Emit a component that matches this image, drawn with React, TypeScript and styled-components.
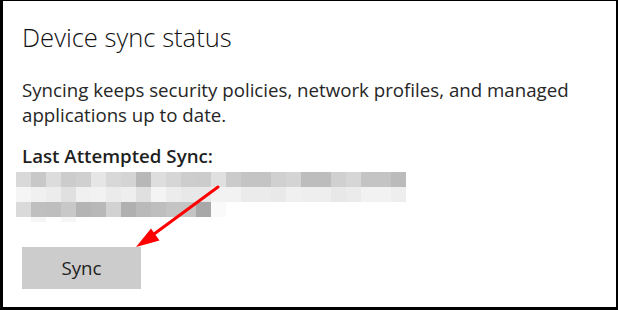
import styled, { createGlobalStyle } from 'styled-components';

const GlobalStyle = createGlobalStyle`
  html, body {
    margin: 0;
    padding: 0;
    background: #ffffff;
  }
  body {
    font-family: 'Open Sans', 'Noto Sans', sans-serif;
  }
`;

const Frame = styled.div`
  position: relative;
  box-sizing: border-box;
  width: 618px;
  height: 310px;
  border-style: solid;
  border-color: #000000;
  border-width: 1px 2px 3px 3px;
  background: #ffffff;
  padding: 21px 0 0 19px;
  display: flex;
  flex-direction: column;
  align-items: flex-start;
`;

const Title = styled.h2`
  margin: 0;
  font-size: 25.6px;
  line-height: 32px;
  font-weight: 300;
  color: #111111;
`;

const Description = styled.p`
  margin: 23px 0 0;
  width: 560px;
  font-size: 18.7px;
  line-height: 25px;
  color: #262626;
`;

const Label = styled.div`
  margin-top: 16px;
  font-size: 18.7px;
  line-height: 25px;
  font-weight: 600;
  color: #1f1f1f;
`;

const Mosaic = styled.svg`
  display: block;
  margin: 4px 0 0 -6px;
`;

const SyncButton = styled.button`
  margin-top: 25px;
  width: 119px;
  height: 42px;
  border: none;
  background: #cccccc;
  font-family: inherit;
  font-size: 18.7px;
  color: #222222;
  padding: 0 0 2px;
  cursor: pointer;
`;

const Arrow = styled.svg`
  position: absolute;
  left: -3px;
  top: -1px;
  pointer-events: none;
`;

// pixelated (redacted) date/time lines, one shade per 15px block
const rows: string[][] = [
  ['d9', 'c8', 'dc', 'cc', 'd0', 'e6', 'd8', 'd4', 'b8', 'de', 'd6', 'cd', 'cc', 'e0', 'cb', 'c4', 'c4', 'd0', 'd4', 'bd', 'bd', 'd0', 'd6', 'c4', 'c4', 'bb'],
  ['f5', 'f0', 'ec', 'e0', 'f0', 'f2', 'eb', 'ee', 'e0', 'f4', 'ec', 'e8', 'e8', 'f2', 'f2', 'eb', 'eb', 'e9', 'f0', 'ee', 'ee', 'e8', 'eb', 'f2', 'f2', 'ee'],
  ['da', 'bf', 'be', 'c8', 'b4', 'b8', 'd2', 'b0', 'ba', 'be', 'c4', 'c4', 'a8', 'fa'],
  ['ff', 'f6', 'ff', 'f6'],
];

const BLOCK = 15;

const App = () => (
  <>
    <GlobalStyle />
    <Frame>
      <Title>Device sync status</Title>
      <Description>
        Syncing keeps security policies, network profiles, and managed applications up to date.
      </Description>
      <Label>Last Attempted Sync:</Label>
      <Mosaic width={390} height={50} viewBox="0 0 390 50">
        {rows.map((row, r) =>
          row.map((shade, c) => (
            <rect
              key={`${r}-${c}`}
              x={c * BLOCK}
              y={r * BLOCK}
              width={BLOCK}
              height={r === 3 ? 5 : BLOCK}
              fill={`#${shade}${shade}${shade}`}
            />
          )),
        )}
      </Mosaic>
      <SyncButton>Sync</SyncButton>
      <Arrow width={619} height={310} viewBox="0 0 619 310">
        <line x1={218} y1={187} x2={152} y2={235.5} stroke="#ff0000" strokeWidth={3} strokeLinecap="round" />
        <polygon points="136,247 151,228.5 159.5,240.5" fill="#ff0000" />
      </Arrow>
    </Frame>
  </>
);

export default App;
